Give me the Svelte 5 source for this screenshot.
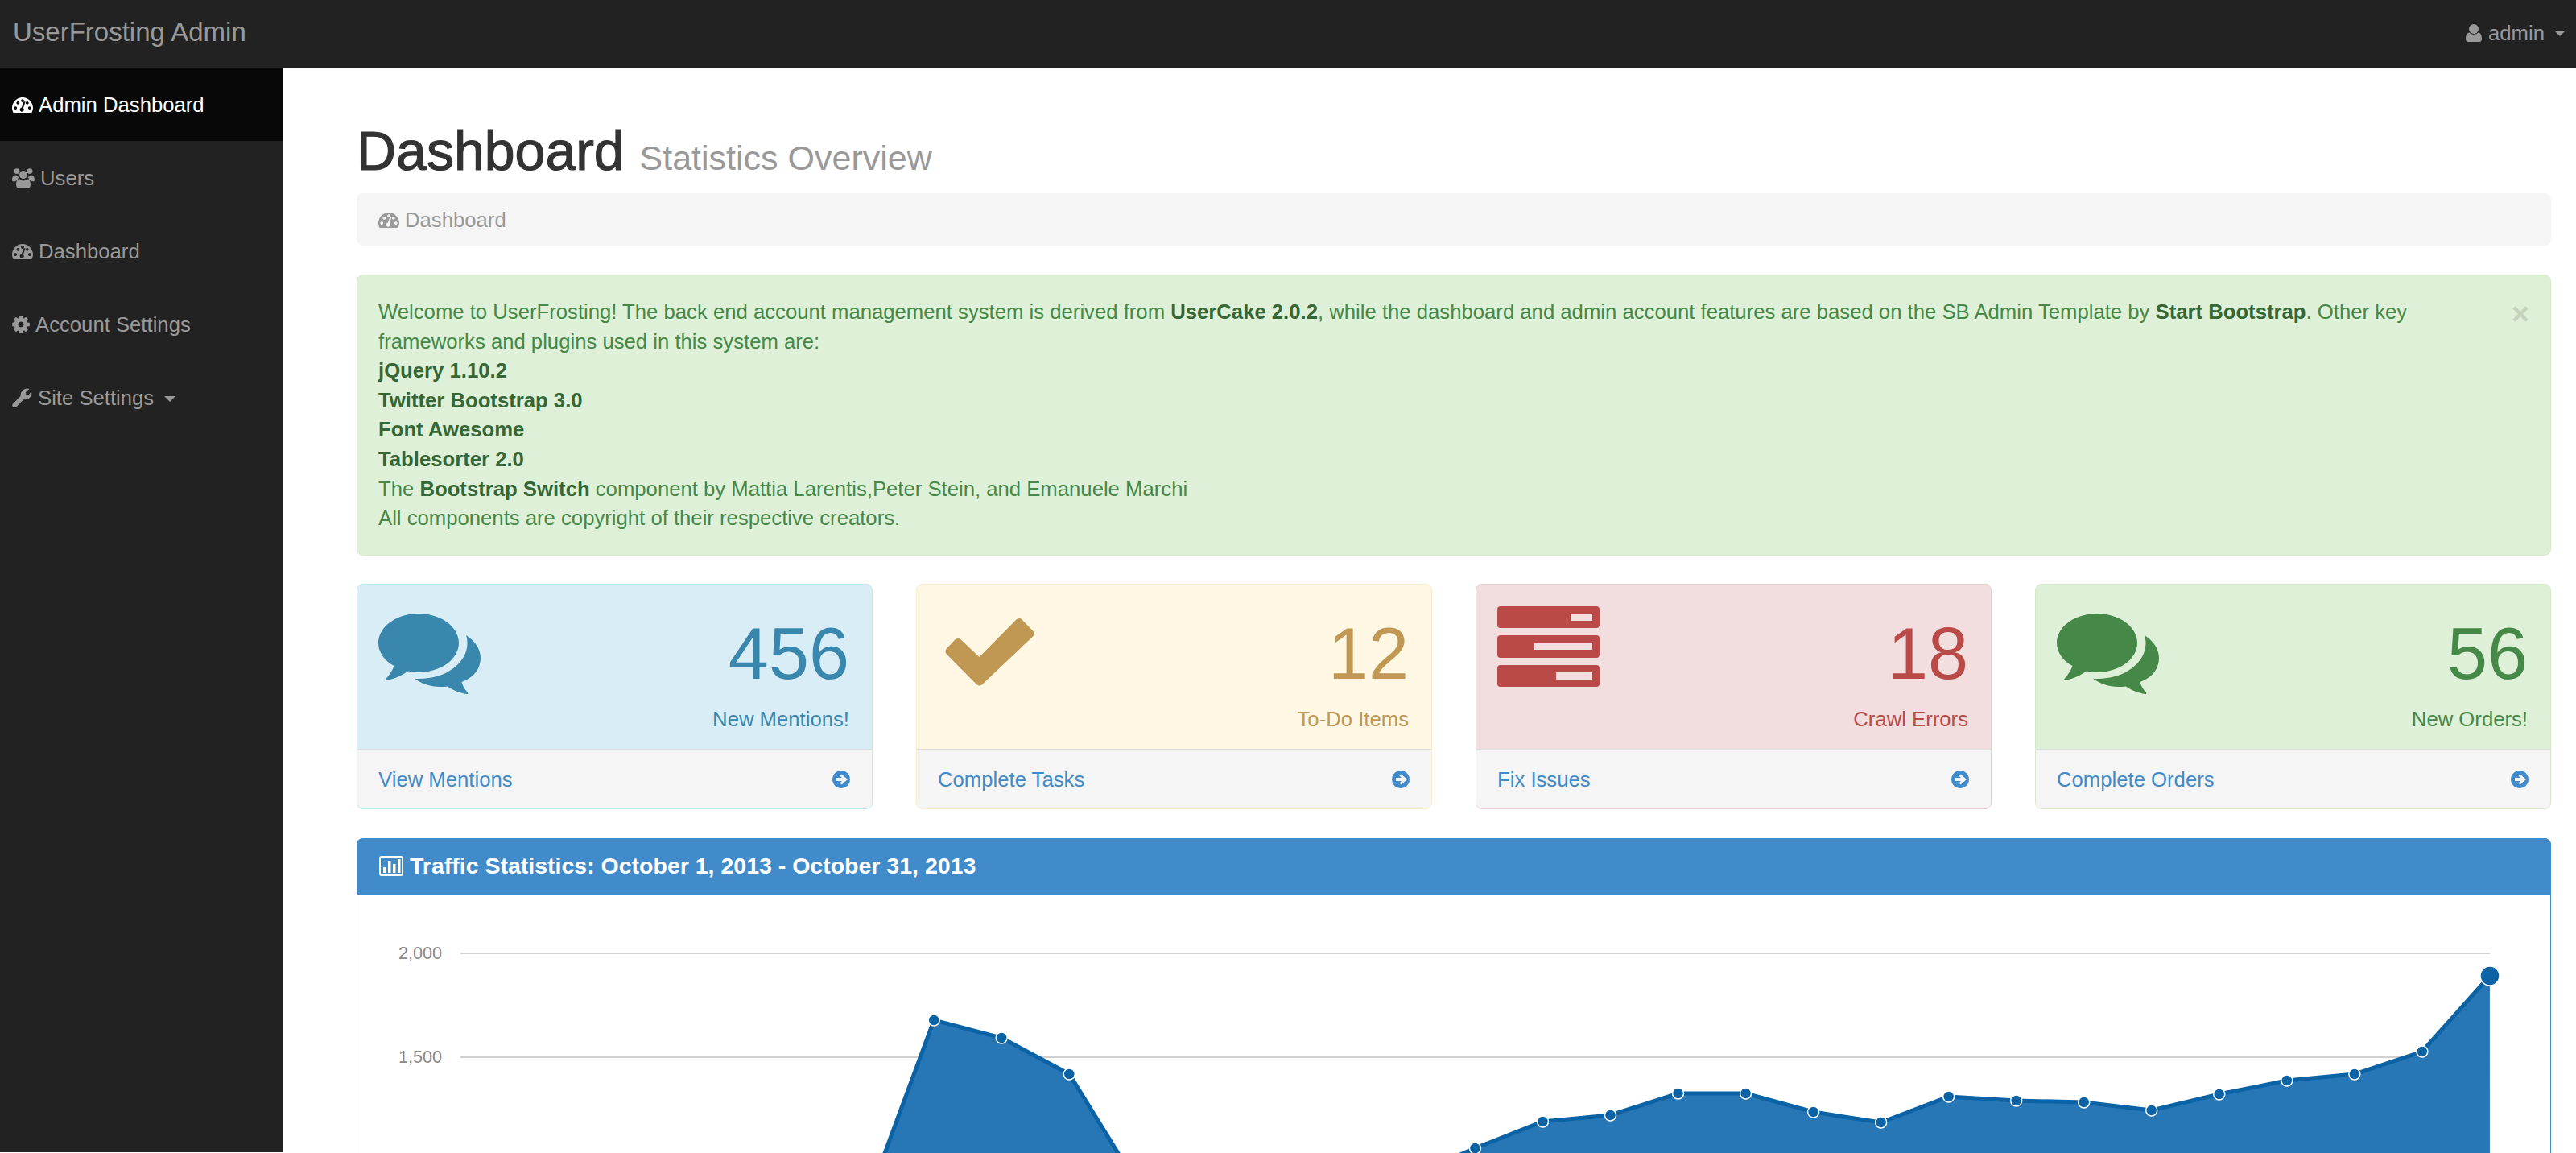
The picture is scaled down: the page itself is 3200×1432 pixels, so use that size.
<script>
	const menu = [
		{ label: "Admin Dashboard", icon: "gauge", active: true },
		{ label: "Users", icon: "users" },
		{ label: "Dashboard", icon: "gauge" },
		{ label: "Account Settings", icon: "gear" },
		{ label: "Site Settings", icon: "wrench", caret: true }
	];

	const cards = [
		{ kind: "info", icon: "comments", num: "456", label: "New Mentions!", link: "View Mentions" },
		{ kind: "warning", icon: "check", num: "12", label: "To-Do Items", link: "Complete Tasks" },
		{ kind: "danger", icon: "tasks", num: "18", label: "Crawl Errors", link: "Fix Issues" },
		{ kind: "success", icon: "comments", num: "56", label: "New Orders!", link: "Complete Orders" }
	];

	// y of each day of the month, in page pixels; the first days fall below the fold
	const ys = [1600, 1600, 1600, 1600, 1600, 1600, 1494, 1267, 1289, 1334, 1470, 1600, 1600, 1560, 1462, 1426, 1393, 1385, 1358, 1358, 1381, 1394, 1362, 1367, 1369, 1379, 1359, 1342, 1334, 1306, 1212];
	const points = ys.map((y, i) => ({ x: 572 + i * 84.03, y }));
	const line = points.map((p) => `${p.x},${p.y}`).join(" ");
	const area = `M572 1600 L${line} L3093 1600 Z`;
	const visible = points.slice(0, -1).filter((p) => p.y < 1440);

	function gearPath() {
		let d = "";
		const teeth = 8;
		for (let i = 0; i < teeth; i++) {
			const a = (i / teeth) * Math.PI * 2;
			const w = 0.2;
			const pts = [
				[8.4, a - w * 1.45],
				[11, a - w],
				[11, a + w],
				[8.4, a + w * 1.45]
			];
			for (const [r, t] of pts) {
				d += (d ? "L" : "M") + (11 + r * Math.cos(t)).toFixed(2) + " " + (11 + r * Math.sin(t)).toFixed(2);
			}
		}
		return d + "Z M11 7.4a3.6 3.6 0 1 0 .01 0Z";
	}
</script>

{#snippet gauge()}
	<svg class="ic gauge" viewBox="0 0 26 19">
		<path fill-rule="evenodd" d="M1.6 19C.6 17 0 15 0 13 0 6 6 0 13 0s13 6 13 13c0 2-.6 4-1.6 6ZM4.2 11.2a1.9 1.9 0 1 0 .01 0ZM7.3 5a1.9 1.9 0 1 0 .01 0ZM13 2.2a1.9 1.9 0 1 0 .01 0ZM21.8 11.2a1.9 1.9 0 1 0 .01 0ZM18.8 5a1.9 1.9 0 1 0 .01 0ZM16.6 5.6 13.9 13.2a2.6 2.6 0 1 1-2-.6L14.6 5Z" />
	</svg>
{/snippet}

{#snippet users()}
	<svg class="ic users" viewBox="0 0 28 25">
		<circle cx="6" cy="3.6" r="3.4" />
		<circle cx="22" cy="3.6" r="3.4" />
		<circle cx="14" cy="8" r="5" />
		<path d="M5 8.5c1 1.3 2 2 3.4 2.4-.8 1-1.4 2.4-1.5 3.6-.9.2-1.9.8-2.6 1.8H1.6C.6 16.3 0 15.6 0 14.5 0 11 1.5 8 5 8.5ZM23 8.5c-1 1.3-2 2-3.4 2.4.8 1 1.4 2.4 1.5 3.6.9.2 1.9.8 2.6 1.8h2.7c1 0 1.6-.7 1.6-1.8 0-3.5-1.5-6.5-5-6ZM9.5 13.2c1 1.3 2.7 2.2 4.5 2.2s3.5-.9 4.5-2.2c3 0 4.5 3 4.5 6.8 0 2.6-1.4 5-3.6 5H8.6C6.4 25 5 22.6 5 20c0-3.8 1.5-6.8 4.5-6.8Z" />
	</svg>
{/snippet}

{#snippet gear()}
	<svg class="ic gear" viewBox="0 0 22 22">
		<path fill-rule="evenodd" d={gearPath()} />
	</svg>
{/snippet}

{#snippet wrench()}
	<svg class="ic wrench" viewBox="0 0 25 24">
		<path d="M1 19.5 10.5 10C10 5 14 .5 19 .5c1 0 2 .2 2.5.5L17 5l.5 3 3 .5L24 4c.3 1 .3 2 .3 2.5C24.300 11.500 19.500 15 14.500 14L5 23.500c-1 1-2.500 1-3.500 0l-.5-.5c-1-1-1-2.500 0-3.500Z" />
	</svg>
{/snippet}

{#snippet comments()}
	<svg class="big comments" viewBox="0 0 127 100">
		<path d="M50 0C22.400 0 0 16.400 0 36.500 0 48 7.500 58.500 19.500 65 17.500 71 13.500 76.500 9.500 81c-.8 1 0 2 1 1.800C21 81 30 76.500 37 71.500c4.300 1 8.500 1.500 13 1.500 27.600 0 50-16.400 50-36.500S77.600 0 50 0Z" />
		<path d="M109 27c1 3 1.500 6.500 1.500 10 0 24-26 44-60 44-2 0-4 0-5.500-.2 7.500 5.800 19 10.200 32 10.200 3 0 6-.2 9-.6 6.500 4.600 15 8.200 24 9.500 1 .2 1.800-.8 1-1.800-4-4-6-8-7.500-13.100C120 79 127 67.500 127 55c0-11-7-21-18-28Z" />
	</svg>
{/snippet}

{#snippet check()}
	<svg class="big check" viewBox="0 0 111 85">
		<path d="M5.500 42 16 31 42.600 56 92 6 105.500 20 42.600 79.500Z" stroke="currentColor" stroke-width="10" stroke-linejoin="round" />
	</svg>
{/snippet}

{#snippet tasks()}
	<svg class="big tasks" viewBox="0 0 127 100">
		<path fill-rule="evenodd" d="M4 0h119a4 4 0 0 1 4 4v19a4 4 0 0 1-4 4H4a4 4 0 0 1-4-4V4a4 4 0 0 1 4-4ZM91 9v9h27V9Z" />
		<path fill-rule="evenodd" d="M4 36h119a4 4 0 0 1 4 4v20a4 4 0 0 1-4 4H4a4 4 0 0 1-4-4V40a4 4 0 0 1 4-4ZM45.500 45v9H118v-9Z" />
		<path fill-rule="evenodd" d="M4 73h119a4 4 0 0 1 4 4v19a4 4 0 0 1-4 4H4a4 4 0 0 1-4-4V77a4 4 0 0 1 4-4ZM73 82v9h45v-9Z" />
	</svg>
{/snippet}

{#snippet arrow()}
	<svg class="arrow" viewBox="0 0 22 22">
		<path fill-rule="evenodd" d="M11 0a11 11 0 1 1-.01 0ZM11.500 4.500 9.500 6.500 12 9H5v4h7l-2.500 2.500 2 2L19 11Z" />
	</svg>
{/snippet}

{#snippet menuIcon(name)}
	{#if name === "gauge"}{@render gauge()}{:else if name === "users"}{@render users()}{:else if name === "gear"}{@render gear()}{:else}{@render wrench()}{/if}
{/snippet}

<div class="page">
	<header class="navbar">
		<a class="brand" href="#top">UserFrosting Admin</a>
		<a class="user" href="#top">
			<svg class="ic person" viewBox="0 0 20 22">
				<circle cx="10" cy="6" r="6" />
				<path d="M4.500 10.500C6 12 8 12.800 10 12.800s4-.8 5.500-2.300c3 .3 4.500 3 4.500 8 0 2-1.300 3.500-3 3.500H3c-1.700 0-3-1.500-3-3.500 0-5 1.500-7.700 4.500-8Z" />
			</svg>
			admin
			<span class="caret"></span>
		</a>
	</header>

	<div class="layout">
		<nav class="sidebar">
			{#each menu as item}
				<a class="item" class:active={item.active} href="#top">
					{@render menuIcon(item.icon)}
					{item.label}
					{#if item.caret}<span class="caret"></span>{/if}
				</a>
			{/each}
		</nav>

		<main class="content">
			<h1>Dashboard <small>Statistics Overview</small></h1>

			<div class="breadcrumb">
				{@render gauge()}
				Dashboard
			</div>

			<div class="alert">
				<button class="close">×</button>
				Welcome to UserFrosting! The back end account management system is derived from <b>UserCake 2.0.2</b>, while the dashboard and admin account features are based on the SB Admin Template by <b>Start Bootstrap</b>. Other key<br />
				frameworks and plugins used in this system are:<br />
				<b>jQuery 1.10.2</b><br />
				<b>Twitter Bootstrap 3.0</b><br />
				<b>Font Awesome</b><br />
				<b>Tablesorter 2.0</b><br />
				The <b>Bootstrap Switch</b> component by Mattia Larentis,Peter Stein, and Emanuele Marchi<br />
				All components are copyright of their respective creators.
			</div>

			<div class="cards">
				{#each cards as c}
					<div class="card {c.kind}">
						<div class="card-head">
							{#if c.icon === "comments"}{@render comments()}{:else if c.icon === "check"}{@render check()}{:else}{@render tasks()}{/if}
							<div class="figures">
								<p class="num">{c.num}</p>
								<p class="what">{c.label}</p>
							</div>
						</div>
						<a class="card-foot" href="#top">
							{c.link}
							{@render arrow()}
						</a>
					</div>
				{/each}
			</div>

			<section class="panel">
				<h3>
					<svg class="ic bars" viewBox="0 0 30 25">
						<path fill-rule="evenodd" d="M3 0h24a3 3 0 0 1 3 3v19a3 3 0 0 1-3 3H3a3 3 0 0 1-3-3V3a3 3 0 0 1 3-3ZM3 2a1 1 0 0 0-1 1v19a1 1 0 0 0 1 1h24a1 1 0 0 0 1-1V3a1 1 0 0 0-1-1Z" />
						<path d="M5 14h3.500v7H5zM11 6h3.500v15H11zM17 10h3.500v11H17zM23 4h3.500v17H23z" />
					</svg>
					Traffic Statistics: October 1, 2013 - October 31, 2013
				</h3>
				<svg class="chart" viewBox="444 1111 2724 361">
					<line x1="572" x2="3093" y1="1184" y2="1184" class="grid" />
					<line x1="572" x2="3093" y1="1313" y2="1313" class="grid" />
					<text x="549" y="1191" class="tick">2,000</text>
					<text x="549" y="1320" class="tick">1,500</text>
					<path d={area} class="area" />
					<polyline points={line} class="line" />
					{#each visible as p}
						<circle cx={p.x} cy={p.y} r="7" class="dot" />
					{/each}
					<circle cx="3093" cy="1212" r="12" class="dot" />
				</svg>
			</section>
		</main>
	</div>
</div>

<style>
	:global(body) {
		margin: 0;
		background: #fff;
	}

	.page {
		height: 1432px;
		overflow: hidden;
		font-family: "Liberation Sans", Arial, sans-serif;
		font-size: 25.7px;
		line-height: 36.6px;
		color: #333;
	}

	a {
		text-decoration: none;
	}

	.ic {
		fill: currentColor;
		flex: none;
	}
	.gauge {
		width: 26px;
		height: 19px;
	}
	.users {
		width: 28px;
		height: 25px;
	}
	.gear {
		width: 22px;
		height: 22px;
	}
	.wrench {
		width: 25px;
		height: 24px;
	}
	.person {
		width: 20px;
		height: 22px;
	}
	.bars {
		width: 30px;
		height: 25px;
	}

	.caret {
		display: inline-block;
		width: 0;
		height: 0;
		border-left: 7px solid transparent;
		border-right: 7px solid transparent;
		border-top: 7px solid currentColor;
	}

	.navbar {
		height: 84px;
		box-sizing: content-box;
		background: #222;
		border-bottom: 1px solid #080808;
		display: flex;
		align-items: center;
		justify-content: space-between;
		padding: 0 13px 0 16px;
	}
	.brand {
		color: #999;
		font-size: 33px;
		margin-bottom: 3px;
	}
	.user {
		color: #999;
		display: flex;
		align-items: center;
		gap: 8px;
		margin-bottom: 2px;
	}
	.user .caret {
		margin-left: 4px;
	}

	.layout {
		display: flex;
		align-items: stretch;
	}

	.sidebar {
		width: 352px;
		flex: none;
		height: 1347px;
		background: #222;
		margin-top: -1px;
	}
	.item {
		height: 91px;
		box-sizing: border-box;
		padding-top: 1px;
		display: flex;
		align-items: center;
		gap: 7px;
		padding-left: 15px;
		color: #999;
	}
	.item .caret {
		margin-left: 6px;
		margin-top: 3px;
	}
	.item.active {
		background: #080808;
		color: #fff;
	}

	.content {
		flex: 1;
		min-width: 0;
		padding: 0 31px 0 91px;
	}

	h1 {
		margin: 66px 0 0;
		font-size: 68px;
		line-height: 73px;
		font-weight: 500;
		-webkit-text-stroke: 1.2px #333;
		height: 89px;
	}
	h1 small {
		font-size: 43px;
		font-weight: 400;
		color: #999;
		-webkit-text-stroke: 0;
	}

	.breadcrumb {
		height: 65px;
		box-sizing: border-box;
		padding-top: 2px;
		background: #f5f5f5;
		border-radius: 8px;
		display: flex;
		align-items: center;
		gap: 7px;
		padding-left: 27px;
		color: #999;
	}

	.alert {
		position: relative;
		margin-top: 36px;
		padding: 27px 60px 27px 26px;
		background: #dff0d8;
		border: 1px solid #d6e9c6;
		border-radius: 8px;
		color: #468847;
	}
	.alert b {
		color: #356635;
	}
	.close {
		position: absolute;
		top: 30px;
		right: 26px;
		padding: 0;
		border: 0;
		background: none;
		font: bold 38px/36px "Liberation Sans", Arial, sans-serif;
		color: #000;
		opacity: 0.12;
	}

	.cards {
		display: grid;
		grid-template-columns: repeat(4, 1fr);
		gap: 54px;
		margin-top: 35px;
	}
	.card {
		height: 280px;
		box-sizing: border-box;
		border: 1px solid;
		border-radius: 8px;
		overflow: hidden;
		display: flex;
		flex-direction: column;
		color: var(--ink);
		background: var(--bg);
		border-color: var(--line);
	}
	.info {
		--ink: #3a87ad;
		--bg: #d9edf7;
		--line: #bce8f1;
	}
	.warning {
		--ink: #c09853;
		--bg: #fdf7e3;
		--line: #faebcc;
	}
	.danger {
		--ink: #b94a48;
		--bg: #f2dede;
		--line: #ebccd1;
	}
	.success {
		--ink: #468847;
		--bg: #dff0d8;
		--line: #d6e9c6;
	}
	.card-head {
		height: 204px;
		display: flex;
		justify-content: space-between;
		padding: 0 28px 0 26px;
	}
	.big {
		fill: currentColor;
		width: 127px;
		height: 100px;
		margin-top: 36px;
	}
	.big.tasks {
		margin-top: 27px;
	}
	.big.check {
		width: 111px;
		height: 85px;
		margin-top: 41px;
		margin-left: 9px;
	}
	.figures {
		text-align: right;
	}
	.num {
		margin: 32px 0 0;
		font-size: 90px;
		line-height: 108px;
	}
	.what {
		margin: 9px 0 0;
	}
	.card-foot {
		flex: 1;
		display: flex;
		align-items: center;
		justify-content: space-between;
		padding: 1px 27px 0 26px;
		background: #f5f5f5;
		border-top: 2px solid #ddd;
		color: #428bca;
	}
	.arrow {
		width: 22px;
		height: 22px;
		fill: #428bca;
	}

	.panel {
		margin-top: 36px;
		border: 1px solid #428bca;
		border-radius: 8px 8px 0 0;
	}
	.panel h3 {
		margin: -1px -1px 0;
		height: 70px;
		box-sizing: border-box;
		display: flex;
		align-items: center;
		gap: 8px;
		padding-left: 28px;
		background: #428bca;
		border-radius: 8px 8px 0 0;
		color: #fff;
		font-size: 28.500px;
		font-weight: bold;
	}

	.chart {
		display: block;
		width: 2724px;
		height: 361px;
	}
	.grid {
		stroke: #d0d0d0;
		stroke-width: 2;
	}
	.tick {
		font-size: 21.600px;
		fill: #888;
		text-anchor: end;
	}
	.area {
		fill: #2776b5;
	}
	.line {
		fill: none;
		stroke: #0b62a4;
		stroke-width: 5;
	}
	.dot {
		fill: #0b62a4;
		stroke: #fff;
		stroke-width: 1.500;
	}
</style>
